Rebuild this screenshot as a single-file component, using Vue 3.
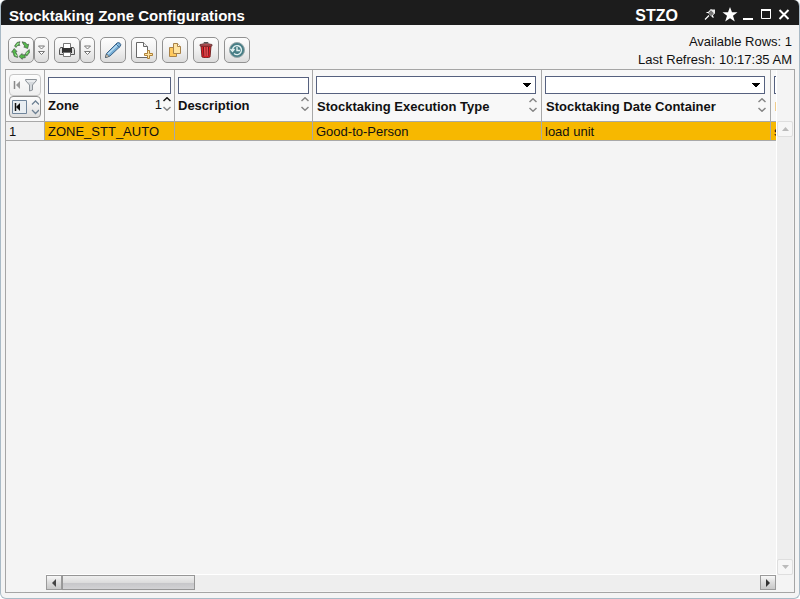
<script setup>
import { ref } from 'vue'

const columns = [
  { key: 'zone', label: 'Zone', kind: 'text', width: 130, order: 1 },
  { key: 'description', label: 'Description', kind: 'text', width: 138 },
  { key: 'execution', label: 'Stocktaking Execution Type', kind: 'select', width: 229 },
  { key: 'container', label: 'Stocktaking Date Container', kind: 'select', width: 229 },
  { key: 'next', label: 'D', kind: 'select', width: 229 },
]
const rows = [
  { zone: 'ZONE_STT_AUTO', description: '', execution: 'Good-to-Person', container: 'load unit', next: 's' },
]
const filters = ref({ zone: '', description: '', execution: '', container: '', next: '' })
</script>

<template>
  <main class="window">
    <header class="titlebar">
      <h1>Stocktaking Zone Configurations</h1>
      <span class="code">STZO</span>
      <nav class="controls">
        <button aria-label="Pin">
          <svg width="12" height="13" viewBox="0 0 12 13"><path d="M1 11.500L5 7.500M2.500 4.500h2l5 5M6.500 1.500l4 4M7 2L4.500 4.500M10 5L8 8" stroke="#fff" stroke-width="1.200" fill="none" /><path d="M7 2l3 3-2.500 3L4.500 5z" fill="#777" /><path d="M6.500 1.500H11V6z" fill="#eee" /></svg>
        </button>
        <button aria-label="Favorite">
          <svg width="16" height="15" viewBox="0 0 16 15"><path d="M8 0l2 5.300h5.500L11 8.800l1.800 5.700L8 11.200l-4.800 3.300L5 8.800.5 5.300H6z" fill="#fff" /></svg>
        </button>
        <button aria-label="Minimize">
          <svg width="12" height="13" viewBox="0 0 12 13"><path d="M1 10h10v2H1z" fill="#fff" /></svg>
        </button>
        <button aria-label="Maximize">
          <svg width="12" height="13" viewBox="0 0 12 13"><path d="M1.500 2v8.500h9V2" fill="none" stroke="#fff" /><path d="M1 1h10v2H1z" fill="#fff" /></svg>
        </button>
        <button aria-label="Close">
          <svg width="12" height="13" viewBox="0 0 12 13"><path d="M1.500 2l9 9M10.500 2l-9 9" stroke="#fff" stroke-width="2" /></svg>
        </button>
      </nav>
    </header>

    <div class="toolbar">
      <div class="tools">
        <div class="split">
          <button class="tool" aria-label="Refresh">
            <svg width="20" height="20" viewBox="0 0 20 20">
              <g fill="#55b94c" stroke="#3c4a3c" stroke-width=".6">
                <path d="M3.500 6l2.500-3.500 3-.8-1 2.300 1 1.300-2.800.4-1.200 1.800z" />
                <path d="M11 1.800l3.500.8 1.500 2 1.700-.4-1 4.300-4-1.500 1.300-.8-1.500-1.700z" />
                <path d="M18.300 9.500l.2 3-2.700 3.500-1.600-1 .8-2.500z" />
                <path d="M14 14.800l.3 2.900-3 .3v1.300L8 16.500l3-3v1.300z" />
                <path d="M6.500 17.500l-3.300-1.200L1.800 12l-1.300.2L3.200 8.500l2.800 3-1.500.3 1.500 2.700z" />
              </g>
              <path d="M5.500 5.500l2-2.500M16.500 12l-1 2M4 14.500l2 1.500" stroke="#b5f3a9" fill="none" />
            </svg>
          </button>
          <button class="tool drop" aria-label="Refresh options">
            <svg width="7" height="11" viewBox="0 0 7 11"><path d="M.5 1h6L3.500 4zM.5 6.500h6l-3 3z" fill="#fff" stroke="#777" /></svg>
          </button>
        </div>
        <div class="split">
          <button class="tool" aria-label="Print">
            <svg width="16" height="16" viewBox="0 0 16 16">
              <path d="M1.500 5.500h13l1 2v5h-15v-5z" fill="#ddd" stroke="#555" />
              <path d="M4.500 6V1.500h7V6" fill="#fff" stroke="#777" />
              <path d="M3 6h10v5H3z" fill="#303030" />
              <path d="M4.500 10.500h7v4h-7z" fill="#fff" stroke="#777" />
            </svg>
          </button>
          <button class="tool drop" aria-label="Print options">
            <svg width="7" height="11" viewBox="0 0 7 11"><path d="M.5 1h6L3.500 4zM.5 6.500h6l-3 3z" fill="#fff" stroke="#777" /></svg>
          </button>
        </div>
        <button class="tool" aria-label="Edit">
          <svg width="18" height="18" viewBox="0 0 18 18">
            <path d="M1.500 16.500l1-4L13 2q1.500-1 3 .3t.3 3L6 15z" fill="#75add5" stroke="#3c648a" />
            <path d="M4 13L14 3.500" stroke="#b9dcf2" stroke-width="1.500" />
            <path d="M1.500 16.500l1-3.500L5 15.500z" fill="#eee3cc" stroke="#444" stroke-width=".6" />
            <path d="M12 3l3.500 3.500" stroke="#45739d" />
          </svg>
        </button>
        <button class="tool" aria-label="New">
          <svg width="18" height="18" viewBox="0 0 18 18">
            <path d="M1.500 1.500h7l4 4v11h-11z" fill="#fff" stroke="#686868" />
            <path d="M8.500 1.500v4h4" fill="#eee" stroke="#686868" />
            <path d="M12.500 9.500h2v3h3v2h-3v3h-2v-3h-3v-2h3z" fill="#ffe3a0" stroke="#af8238" />
          </svg>
        </button>
        <button class="tool" aria-label="Copy">
          <svg width="16" height="16" viewBox="0 0 16 16">
            <path d="M2.500 5.500h7v9h-7z" fill="#ffc95c" stroke="#a88249" />
            <path d="M6.500 1.500h4l3 3v7h-7z" fill="#ffe4a3" stroke="#a88249" />
            <path d="M10.500 1.500v3h3" fill="#fff" stroke="#a88249" />
          </svg>
        </button>
        <button class="tool" aria-label="Delete">
          <svg width="14" height="16" viewBox="0 0 14 16">
            <path d="M2 4h10l-1 11q-4 1.500-8 0z" fill="#e51d25" stroke="#762626" />
            <path d="M4.500 5l.5 9M7 5v9M9.500 5L9 14" stroke="#621c20" />
            <path d="M5.800 5l.3 9M8.200 5v9" stroke="#ff8585" stroke-width=".7" />
            <path d="M1 2.500q6-2 12 0V4H1z" fill="#bd5458" stroke="#603333" stroke-width=".8" /><path d="M5 1.500V.5h4v1" fill="none" stroke="#555" />
          </svg>
        </button>
        <button class="tool" aria-label="History">
          <svg width="16" height="16" viewBox="0 0 16 16">
            <circle cx="8" cy="8" r="7.500" fill="#477e86" stroke="#9aa8aa" />
            <path d="M3.500 8a4.500 4.500 0 1 1 1.500 3.500M1.500 7l2 2.500 2-2.500M8 5v3.500h3" fill="none" stroke="#e2f1f1" stroke-width="1.400" />
          </svg>
        </button>
      </div>
      <div class="status">
        <div>Available Rows: 1</div>
        <div>Last Refresh: 10:17:35 AM</div>
      </div>
    </div>

    <section class="panel">
      <div class="viewport">
        <table>
          <colgroup>
            <col class="marker">
            <col v-for="c in columns" :key="c.key" :style="{ width: c.width + 'px' }">
          </colgroup>
          <thead>
            <tr>
              <td class="corner">
                <button class="mini faded" aria-label="Reset filter">
                  <svg width="26" height="16" viewBox="0 0 26 16"><path d="M2.500 4v8" stroke="#888" stroke-width="1.500" /><path d="M8 4v8L4 8z" fill="#999" /><path d="M13.500 2.500h11v1l-4 4.500v5l-3 1V8l-4-4.500z" fill="#d5d9dd" stroke="#8d9399" /><path d="M15 4h8" stroke="#fff" /></svg>
                </button>
                <button class="mini" aria-label="Reset sorting">
                  <svg width="28" height="18" viewBox="0 0 28 18"><path d="M1.500 2.500h14v13h-14z" fill="#e9eef2" stroke="#70859b" /><path d="M4.500 5v8" stroke="#111" stroke-width="1.500" /><path d="M9 5v8L5 9z" fill="#111" /><path d="M21 6.500L24.500 3 28 6.500M21 12l3.500 3.500L28 12" fill="none" stroke="#6d8093" stroke-width="1.300" /></svg>
                </button>
              </td>
              <th v-for="c in columns" :key="c.key" :class="c.kind">
                <input v-if="c.kind === 'text'" v-model="filters[c.key]" type="text" :aria-label="'Filter ' + c.label">
                <select v-else v-model="filters[c.key]" :aria-label="'Filter ' + c.label"><option value=""></option></select>
                <div class="heading">
                  <span>{{ c.label }}</span>
                  <button class="sort" :aria-label="'Sort by ' + c.label">
                    <span v-if="c.order">{{ c.order }}</span>
                    <svg width="8" height="14" viewBox="0 0 8 14"><path d="M.5 4L4 .8 7.500 4" fill="none" :stroke="c.order ? '#111' : '#858585'" stroke-width="1.500" /><path d="M.5 10L4 13.200 7.500 10" fill="none" stroke="#858585" stroke-width="1.500" /></svg>
                  </button>
                </div>
              </th>
            </tr>
          </thead>
          <tbody>
            <tr v-for="(r, i) in rows" :key="r.zone">
              <td class="number">{{ i + 1 }}</td>
              <td v-for="c in columns" :key="c.key" class="selected">{{ r[c.key] }}</td>
            </tr>
          </tbody>
        </table>
      </div>
      <div class="vscroll">
        <div class="vtrack">
          <button class="pale" aria-label="Scroll up"><svg width="7" height="4" viewBox="0 0 7 4"><path d="M0 4L3.500 0 7 4z" fill="#bbb" /></svg></button>
          <button class="pale" aria-label="Scroll down"><svg width="7" height="4" viewBox="0 0 7 4"><path d="M0 0h7L3.500 4z" fill="#bbb" /></svg></button>
        </div>
      </div>
      <div class="hscroll">
        <button aria-label="Scroll left"><svg width="4" height="8" viewBox="0 0 4 8"><path d="M4 0v8L0 4z" fill="#444" /></svg></button>
        <div class="track"><div class="thumb"></div></div>
        <button aria-label="Scroll right"><svg width="4" height="8" viewBox="0 0 4 8"><path d="M0 0v8l4-4z" fill="#333" /></svg></button>
      </div>
    </section>
  </main>
</template>

<style>
body { background: #fff; }
</style>

<style scoped>
* { box-sizing: border-box; }
button { padding: 0; border: 0; background: none; font: inherit; color: inherit; }
svg { display: block; flex: none; }
.window {
  display: flex;
  flex-direction: column;
  height: 100vh;
  overflow: hidden;
  border: 1px solid #a9bac6;
  border-top: 0;
  border-radius: 6px;
  background: #f4f4f4;
  color: #111;
  font: 13px/18px "Liberation Sans", Arial, sans-serif;
}
.titlebar {
  display: flex;
  align-items: center;
  flex: none;
  height: 25px;
  margin: 0 -1px;
  padding: 0 10px 0 9px;
  background: #1c1c1c;
  color: #fff;
}
h1, .code { margin: 0; padding-top: 6px; font-size: 15px; line-height: 18px; font-weight: bold; }
h1 { flex: 1; }
.code { font-size: 16px; }
.controls { display: flex; align-items: center; gap: 6px; margin-left: 26px; padding-top: 3px; }
.controls button:nth-child(2) { margin-right: -2px; }
.toolbar { display: flex; justify-content: space-between; flex: none; height: 44px; padding: 0 7px; }
.tools { display: flex; gap: 5px; padding-top: 12px; }
.split { display: flex; }
.tool {
  display: flex;
  align-items: center;
  justify-content: center;
  width: 26px;
  height: 26px;
  border: 1px solid #929292;
  border-radius: 5px;
  background: linear-gradient(#fdfdfd, #f1f1f1 50%, #dcdcdc);
}
.drop { width: 15px; }
.status { padding-top: 8px; text-align: right; }
.panel {
  display: grid;
  grid-template: minmax(0, 1fr) 18px / minmax(0, 1fr) 18px;
  flex: 1;
  min-height: 0;
  margin: 0 4px 5px;
  border: 1px solid #a5a5a5;
}
.viewport { overflow: hidden; }
table { width: 0; border-collapse: separate; border-spacing: 0; table-layout: fixed; }
.marker { width: 39px; }
th, td { height: 19px; padding: 0 3px; border-right: 1px solid #a8a8a8; border-bottom: 1px solid #a8a8a8; line-height: 18px; text-align: left; white-space: nowrap; }
tbody td { padding-top: 1px; line-height: 17px; }
thead th, thead td { height: 52px; background: #f8f8f8; vertical-align: top; }
thead .corner { padding: 4px 3px 0; }
.mini { display: flex; align-items: center; justify-content: center; width: 32px; height: 22px; border: 1px solid #8e8e8e; border-radius: 4px; background: linear-gradient(#fdfdfd, #dedede); }
.faded { border-color: #c6c6c6; background: linear-gradient(#fdfdfd, #efefef); }
.number { background: #f0f0f0; }
.selected { background: #f7b800; }
th.text { padding-top: 7px; }
th.select { padding: 6px 5px 0 3px; }
th input, th select { display: block; width: 100%; margin: 0; padding: 0 2px; border: 1px solid #56617f; border-radius: 0; background-color: #fff; font: inherit; }
th input { height: 17px; }
th select {
  height: 18px;
  appearance: none;
  background-image: linear-gradient(to bottom left, #000 50%, transparent 51%), linear-gradient(to bottom right, #000 50%, transparent 51%);
  background-image: linear-gradient(to bottom right, #000 50%, transparent 51%), linear-gradient(to bottom left, #000 50%, transparent 51%);
  background-position: right 4px center, right 8px center;
  background-size: 4px 4px;
  background-repeat: no-repeat;
}
.heading { display: flex; justify-content: space-between; height: 20px; padding-top: 2px; line-height: 20px; }
.select .heading { padding: 3px 0 0 1px; margin-right: -1px; }
.sort { display: flex; align-items: flex-start; gap: 1px; font-weight: normal; line-height: 18px; }
.sort svg { margin-top: 1px; }
.vscroll { padding-top: 51px; margin-bottom: -1px; border-left: 1px solid #fff; }
.vtrack { display: flex; flex-direction: column; justify-content: space-between; width: 16px; height: 100%; background: #eee; }
.vscroll button, .hscroll button { display: flex; align-items: center; justify-content: center; width: 16px; height: 16px; flex: none; border: 1px solid #9a9a9a; background: linear-gradient(#f8f8f8, #dcdcdc 50%, #c8c8c8); }
.vscroll .pale { border-color: #dedede; border-radius: 2px; background: #f6f6f6; }
.hscroll { display: flex; margin-left: 40px; border-top: 1px solid #fff; }
.hscroll .track { flex: 1; height: 16px; background: #eee; }
.thumb { width: 19%; height: 15px; border: 1px solid #969696; background: linear-gradient(#efefef, #dcdcdc 50%, #c5c5c8 51%, #d2d2d4); }
.hscroll button { height: 15px; }
</style>
